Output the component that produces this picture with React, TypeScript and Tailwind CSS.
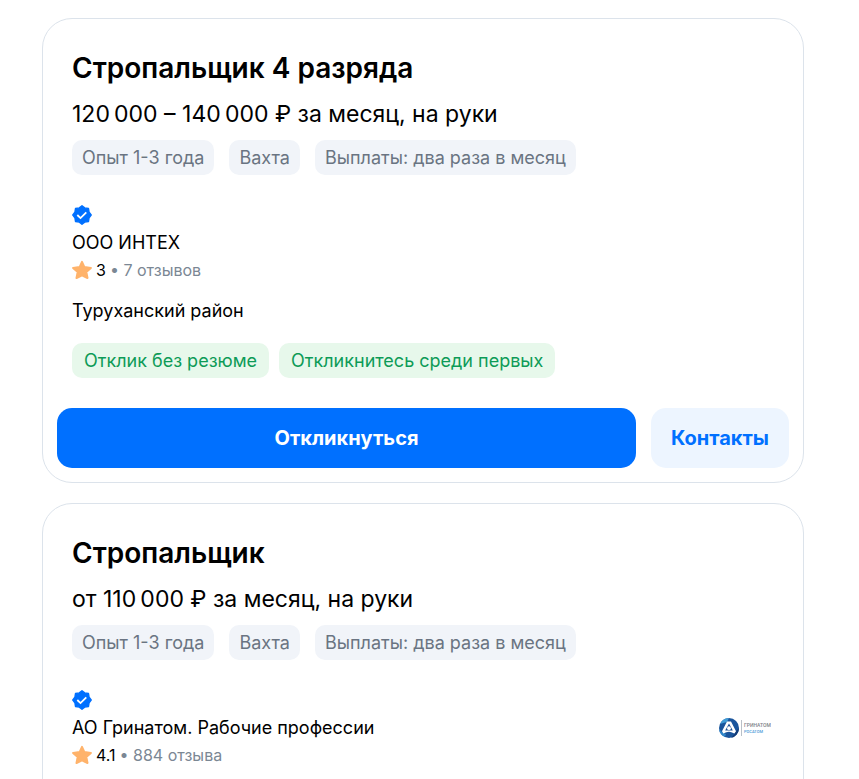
import React from 'react';

interface Vacancy {
  id: string;
  title: string;
  salary: string;
  tags: string[];
  company: string;
  rating: string;
  reviews: string;
  location?: string;
  labels: string[];
  hasLogo?: boolean;
}

const vacancies: Vacancy[] = [
  {
    id: 'inteh',
    title: 'Стропальщик 4 разряда',
    salary: '120\u2009000 – 140\u2009000 ₽ за месяц, на руки',
    tags: ['Опыт 1-3 года', 'Вахта', 'Выплаты: два раза в месяц'],
    company: 'ООО ИНТЕХ',
    rating: '3',
    reviews: '7 отзывов',
    location: 'Туруханский район',
    labels: ['Отклик без резюме', 'Откликнитесь среди первых'],
  },
  {
    id: 'greenatom',
    title: 'Стропальщик',
    salary: 'от 110\u2009000 ₽ за месяц, на руки',
    tags: ['Опыт 1-3 года', 'Вахта', 'Выплаты: два раза в месяц'],
    company: 'АО Гринатом. Рабочие профессии',
    rating: '4.1',
    reviews: '884 отзыва',
    labels: [],
    hasLogo: true,
  },
];

const VerifiedIcon: React.FC = () => (
  <svg className="block w-5 h-5" viewBox="0 0 20 20" role="img" aria-label="Проверенный работодатель">
    <path
      d="M10 .8 12.7 2.9 16.5 3.5 17.1 7.3 19.2 10 17.1 12.7 16.5 16.5 12.7 17.1 10 19.2 7.3 17.1 3.5 16.5 2.9 12.7 .8 10 2.9 7.3 3.5 3.5 7.3 2.9Z"
      fill="#0070ff"
      stroke="#0070ff"
      strokeWidth="1.4"
      strokeLinejoin="round"
    />
    <path d="m5.3 10 3.2 3.1 5.8-5.8" fill="none" stroke="#fff" strokeWidth="1.8" />
  </svg>
);

const StarIcon: React.FC = () => (
  <svg className="block w-5 h-5" viewBox="0 0 20 20" aria-hidden="true">
    <path
      d="M10 1.8 12.4 7.1 18.9 7.9 14.3 12 15.5 18 10 15.3 4.5 18 5.7 12 1.1 7.9 7.6 7.1Z"
      fill="#ffb36b"
      stroke="#ffb36b"
      strokeWidth="2"
      strokeLinejoin="round"
    />
  </svg>
);

const GreenatomLogo: React.FC = () => (
  <svg className="block w-[52px] h-5" viewBox="0 0 52 20" role="img" aria-label="Гринатом">
    <circle cx="10" cy="10" r="10" fill="#1a559c" />
    <path d="M1 6A10 10 0 0 1 10 0L8 4Q4 5 1 6Z" fill="#3f9bd6" />
    <path d="M0 11A10 10 0 0 0 6 19L7 16Q3 15 0 11Z" fill="#2f86c9" />
    <path d="M12 20A10 10 0 0 0 20 10L17 13Q15 17 12 20Z" fill="#123c78" />
    <path d="M8 3.6H12L17 13.2 15.4 15.4Q12 13.8 10 13.8 7.4 13.8 4.4 15.4L3 13.2Z" fill="#fff" />
    <path d="M10 5.4 13.8 12.4H6.2Z" fill="#1b4f94" />
    <circle cx="10" cy="10.2" r="1.9" fill="#fff" />
    <path d="M22.5 2V18" stroke="#b9c0c8" strokeWidth="1" />
    <text x="25" y="9" fontSize="5" fontWeight="500" fontFamily="Roboto, sans-serif" fill="#7d8288">ГРИНАТОМ</text>
    <text x="25" y="15" fontSize="4" fontWeight="500" fontFamily="Roboto, sans-serif" fill="#4d9bd8">РОСАТОМ</text>
  </svg>
);

const VacancyCard: React.FC<{ vacancy: Vacancy }> = ({ vacancy }) => (
  <article className="rounded-[30px] border border-[#dce3eb] bg-white px-[14px] pt-[29px] pb-[14px] last:pb-16">
    <div className="px-[15px]">
      <h2 className="text-[28px] leading-10 font-semibold">{vacancy.title}</h2>
      <p className="mt-[10px] text-[23px] leading-8">{vacancy.salary}</p>
      <ul className="mt-[10px] flex flex-wrap gap-[15px]">
        {vacancy.tags.map(tag => (
          <li key={tag} className="rounded-[10px] bg-[#f1f4f9] px-[10px] text-[18px] leading-[35px] text-[#6a7482]">{tag}</li>
        ))}
      </ul>
      <div className="mt-[30px] flex items-center justify-between pr-[3px]">
        <div>
          <VerifiedIcon />
          <p className="mt-[5px] text-[18px] leading-[26px]">{vacancy.company}</p>
          <div className="mt-1 flex items-center gap-1 text-[16px] leading-5">
            <StarIcon />
            <span>{vacancy.rating}</span>
            <span className="text-[#7b8794]">• {vacancy.reviews}</span>
          </div>
        </div>
        {vacancy.hasLogo && <GreenatomLogo />}
      </div>
      {vacancy.location && <p className="mt-[18px] text-[18px] leading-[26px]">{vacancy.location}</p>}
      {vacancy.labels.length > 0 && (
        <ul className="mt-[19px] flex flex-wrap gap-[10px]">
          {vacancy.labels.map(label => (
            <li key={label} className="rounded-[10px] bg-[#e7f8eb] px-3 text-[18px] leading-[35px] text-[#0d9b57]">{label}</li>
          ))}
        </ul>
      )}
    </div>
    {vacancy.labels.length > 0 && (
      <div className="mt-[30px] flex gap-[15px]">
        <button type="button" className="h-[60px] grow rounded-[15px] bg-[#0070ff] text-[20px] font-bold text-white">
          Откликнуться
        </button>
        <button type="button" className="h-[60px] rounded-[15px] bg-[#edf5ff] px-5 text-[20px] font-bold text-[#0070ff]">
          Контакты
        </button>
      </div>
    )}
  </article>
);

export default function App() {
  return (
    <main className="flex h-screen flex-col gap-5 overflow-hidden bg-white pt-[18px] pr-[55px] pl-[42px] font-['Inter',sans-serif] text-black *:shrink-0">
      {vacancies.map(vacancy => (
        <VacancyCard key={vacancy.id} vacancy={vacancy} />
      ))}
    </main>
  );
}
